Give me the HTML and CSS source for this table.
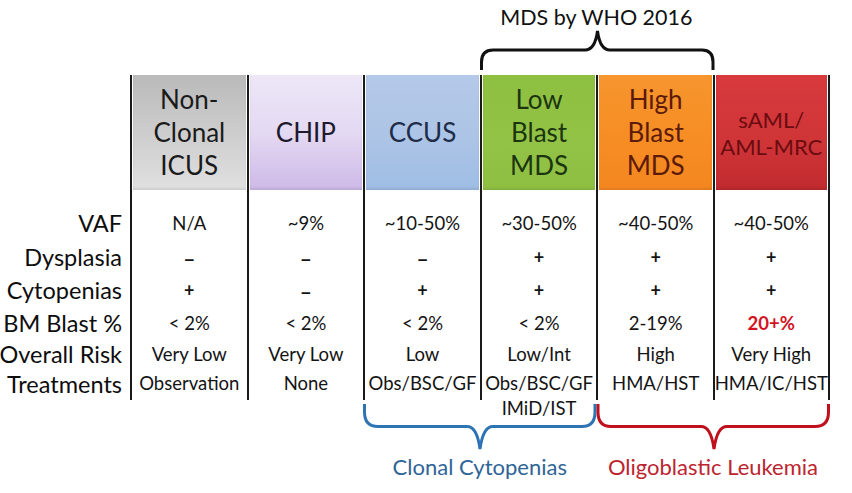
FILE: index.html
```html
<!DOCTYPE html>
<html>
<head>
<meta charset="utf-8">
<link rel="stylesheet" href="styles.css">
</head>
<body>
<div class="page">
  <div class="top">
    <div class="title">MDS by WHO 2016</div>
    <svg class="brace-top" width="234" height="47" viewBox="0 0 234 47">
      <path d="M1.5,42 L1.5,34 Q1.5,22 13,22 L105,22 Q115,22 117.5,3 Q120,22 130,22 L222,22 Q233,22 233,34 L233,42" />
    </svg>
  </div>

  <div class="table">
    <div class="lab"></div>
    <div class="hcell"><div class="hbox gray">Non-<br>Clonal<br>ICUS</div></div>
    <div class="hcell"><div class="hbox purple">CHIP</div></div>
    <div class="hcell"><div class="hbox blue">CCUS</div></div>
    <div class="hcell"><div class="hbox green">Low<br>Blast<br>MDS</div></div>
    <div class="hcell"><div class="hbox orange">High<br>Blast<br>MDS</div></div>
    <div class="hcell last"><div class="hbox red">sAML/<br>AML-MRC</div></div>

    <div class="lab">VAF</div>
    <div class="cell">N/A</div>
    <div class="cell">~9%</div>
    <div class="cell">~10-50%</div>
    <div class="cell">~30-50%</div>
    <div class="cell">~40-50%</div>
    <div class="cell last">~40-50%</div>

    <div class="lab">Dysplasia</div>
    <div class="cell"><b class="minus">–</b></div>
    <div class="cell"><b class="minus">–</b></div>
    <div class="cell"><b class="minus">–</b></div>
    <div class="cell"><b class="plus">+</b></div>
    <div class="cell"><b class="plus">+</b></div>
    <div class="cell last"><b class="plus">+</b></div>

    <div class="lab">Cytopenias</div>
    <div class="cell"><b class="plus">+</b></div>
    <div class="cell"><b class="minus">–</b></div>
    <div class="cell"><b class="plus">+</b></div>
    <div class="cell"><b class="plus">+</b></div>
    <div class="cell"><b class="plus">+</b></div>
    <div class="cell last"><b class="plus">+</b></div>

    <div class="lab">BM Blast %</div>
    <div class="cell">&lt; 2%</div>
    <div class="cell">&lt; 2%</div>
    <div class="cell">&lt; 2%</div>
    <div class="cell">&lt; 2%</div>
    <div class="cell">2-19%</div>
    <div class="cell last"><b class="hot">20+%</b></div>

    <div class="lab">Overall Risk</div>
    <div class="cell">Very Low</div>
    <div class="cell">Very Low</div>
    <div class="cell">Low</div>
    <div class="cell">Low/Int</div>
    <div class="cell">High</div>
    <div class="cell last">Very High</div>

    <div class="lab">Treatments</div>
    <div class="cell tr"><span class="l1">Observation</span></div>
    <div class="cell tr"><span class="l1">None</span></div>
    <div class="cell tr"><span class="l1">Obs/BSC/GF</span></div>
    <div class="cell tr"><span class="l1">Obs/BSC/GF</span><span class="l2">IMiD/IST</span></div>
    <div class="cell tr"><span class="l1">HMA/HST</span></div>
    <div class="cell tr last"><span class="l1">HMA/IC/HST</span></div>
  </div>

  <div class="bottom">
    <svg class="brace-blue" width="234" height="50" viewBox="0 0 234 50">
      <path d="M1.5,4 L1.5,12 Q1.5,26.5 15,26.5 L104,26.5 Q114,26.5 117,49 Q120,26.5 130,26.5 L219,26.5 Q232,26.5 232,12 L232,4" />
    </svg>
    <svg class="brace-red" width="234" height="50" viewBox="0 0 234 50">
      <path d="M2,4 L2,12 Q2,26.5 15,26.5 L105,26.5 Q115,26.5 118,49 Q121,26.5 131,26.5 L219,26.5 Q232.5,26.5 232.5,12 L232.5,4" />
    </svg>
    <div class="blabel clonal">Clonal Cytopenias</div>
    <div class="blabel oligo">Oligoblastic Leukemia</div>
  </div>
</div>
</body>
</html>
```

FILE: styles.css
```css
html, body {
  margin: 0;
  padding: 0;
  background: #ffffff;
}

body {
  font-family: Lato, "Open Sans", sans-serif;
  color: #111111;
}

.page {
  width: 852px;
  height: 493px;
  overflow: hidden;
}

.top,
.table,
.bottom {
  display: grid;
  grid-template-columns: 130px repeat(6, 116.6px);
}

/* ---------- top: title + brace ---------- */
.top {
  grid-template-rows: 28px 47px;
}

.title {
  grid-column: 5 / 7;
  grid-row: 1;
  text-align: center;
  font-size: 21.5px;
  line-height: 28px;
  padding-top: 3px;
  color: #111;
  white-space: nowrap;
}

.brace-top {
  grid-column: 5 / 7;
  grid-row: 2;
  overflow: visible;
}

.brace-top path {
  fill: none;
  stroke: #111;
  stroke-width: 3;
}

/* ---------- table ---------- */
.table {
  grid-template-rows: 131px 34px 34px 32px 34px 28px 32px;
}

.lab {
  text-align: right;
  padding-right: 8px;
  font-size: 23.5px;
  color: #0d0d0d;
  display: flex;
  align-items: center;
  justify-content: flex-end;
  white-space: nowrap;
}

.hcell {
  border-left: 2px solid #1a1a1a;
  padding: 0 1px 16px 1px;
}

.hcell.last,
.cell.last {
  border-right: 2px solid #1a1a1a;
}

.hbox {
  height: 115px;
  display: flex;
  align-items: center;
  justify-content: center;
  text-align: center;
  font-size: 26px;
  line-height: 33px;
  box-shadow: inset 0 -2px 2px rgba(0, 0, 0, 0.08);
}

.gray {
  background: linear-gradient(to bottom, #bababa, #cdcdcd 50%, #e0e0e0);
  color: #1a1a1a;
}

.purple {
  background: linear-gradient(to bottom, #ede7f7, #e4d9f3 50%, #cdb9e7);
  color: #1c1a2c;
}

.blue {
  background: linear-gradient(to bottom, #b5c9e8, #acc4e6 55%, #9fbde4);
  color: #1e2c48;
}

.green {
  background: linear-gradient(to bottom, #8dbf40, #93c346 60%, #8fbf42);
  color: #1b3510;
}

.orange {
  background: linear-gradient(to bottom, #f7952e, #f68d23 60%, #f48620);
  color: #5c1a0a;
}

.red {
  background: linear-gradient(to bottom, #d83a3e, #cf3437 60%, #c02b2f);
  color: #6a0c10;
  font-size: 22px;
  line-height: 27px;
}

.cell {
  border-left: 2px solid #1a1a1a;
  display: flex;
  align-items: center;
  justify-content: center;
  font-size: 18.5px;
  color: #141414;
  white-space: nowrap;
}

.plus {
  font-weight: 700;
  font-size: 18px;
}

.minus {
  font-weight: 700;
  font-size: 21px;
}

.hot {
  color: #d3141f;
  font-weight: 700;
}

.cell.tr {
  flex-direction: column;
  align-items: center;
  justify-content: flex-start;
}

.l1 {
  display: block;
  line-height: 31px;
}

.l2 {
  display: block;
  line-height: 18px;
}

/* ---------- bottom braces ---------- */
.bottom {
  grid-template-rows: 50px 34px;
}

.brace-blue {
  grid-column: 4 / 6;
  grid-row: 1;
  overflow: visible;
}

.brace-red {
  grid-column: 6 / 8;
  grid-row: 1;
  overflow: visible;
}

.brace-blue path,
.brace-red path {
  fill: none;
  stroke-width: 3;
}

.brace-blue path {
  stroke: #2e74b5;
}

.brace-red path {
  stroke: #c0101c;
}

.blabel {
  grid-row: 2;
  text-align: center;
  font-size: 22px;
  line-height: 34px;
  white-space: nowrap;
}

.clonal {
  grid-column: 4 / 6;
  color: #2f6597;
}

.oligo {
  grid-column: 6 / 8;
  color: #bd2430;
}
```
